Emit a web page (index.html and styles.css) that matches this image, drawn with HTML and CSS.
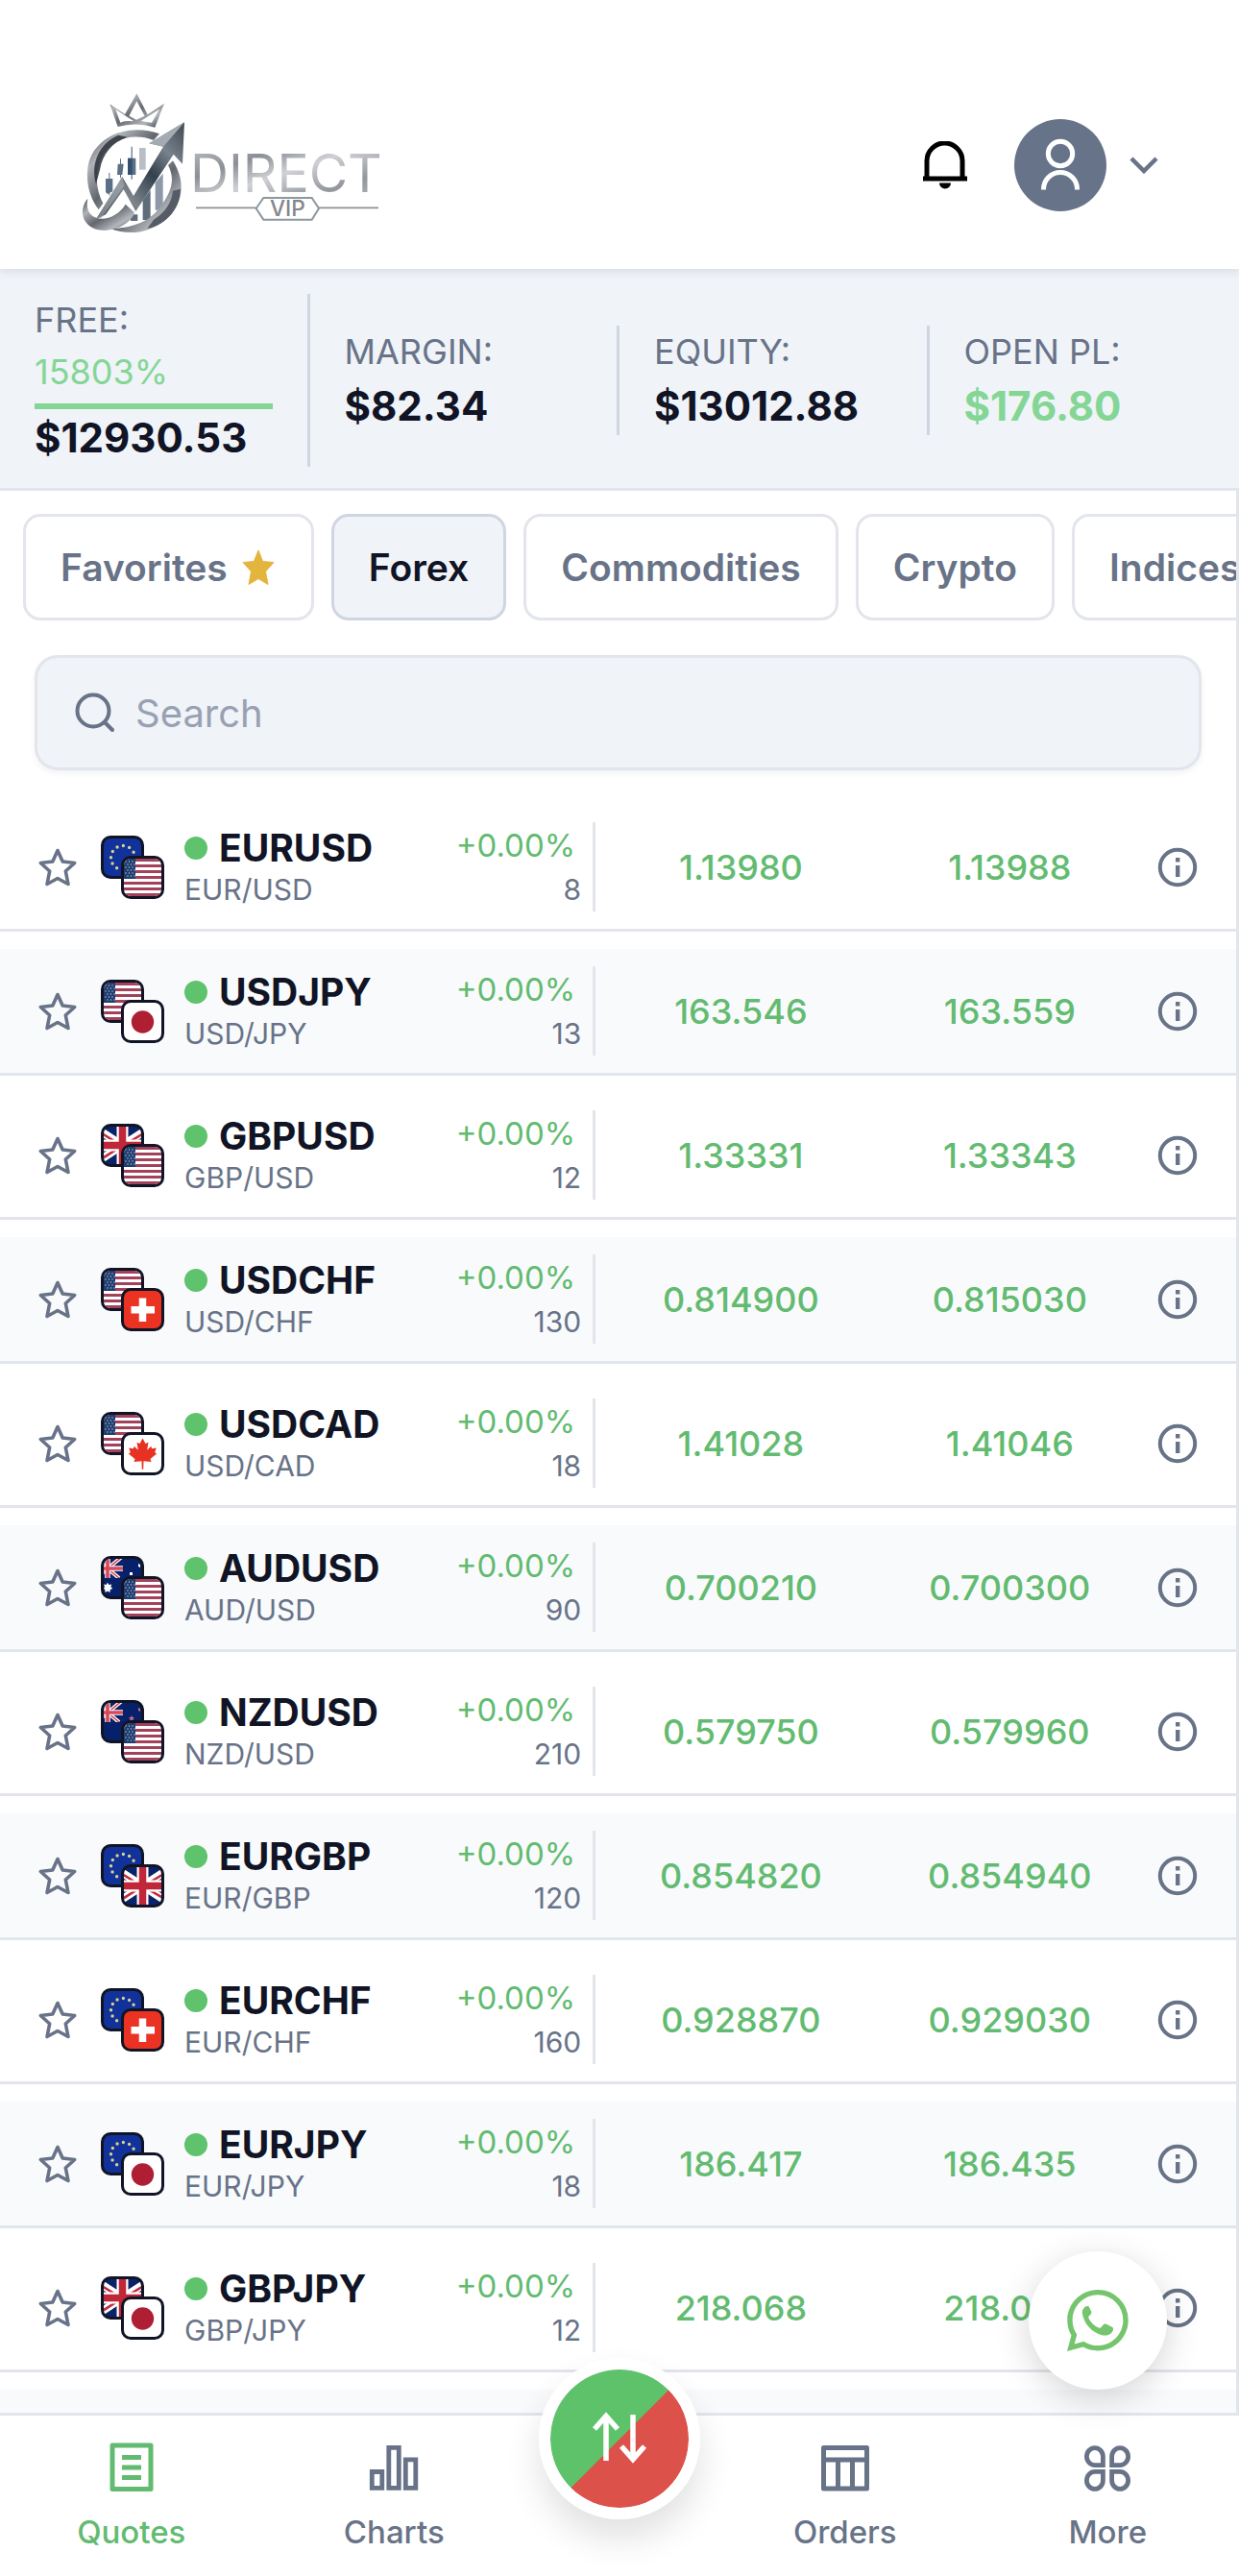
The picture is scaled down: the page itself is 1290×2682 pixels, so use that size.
FILE: index.html
```html
<!DOCTYPE html>
<html lang="en">
<head>
<meta charset="utf-8">
<meta name="viewport" content="width=device-width, initial-scale=1">
<title>Direct VIP – Quotes</title>
<link rel="stylesheet" href="styles.css">
</head>
<body>
<svg class="sprite" width="0" height="0" aria-hidden="true">
  <symbol id="star" viewBox="0 0 42 42"><path d="M21 3.500 26.200 15 38.700 16.500 29.300 25 32 38.500 21 32.500 10 38.500 12.700 25 3.300 16.500 15.800 15Z" fill="none" stroke="currentColor" stroke-width="3.600" stroke-linejoin="round"/></symbol>
  <symbol id="info" viewBox="0 0 42 42"><circle cx="21" cy="21" r="18.200" fill="none" stroke="currentColor" stroke-width="4"/><path d="M19 11h4.400v4.400H19zM19 19h4.400v12H19z" fill="currentColor"/></symbol>
  <symbol id="eu" viewBox="0 0 39 39"><path fill="#11329a" d="M0 0h39v39H0z"/><circle cx="20" cy="20" r="12.500" fill="none" stroke="#d9d28e" stroke-width="3.400" stroke-linecap="round" stroke-dasharray="0 6.545"/></symbol>
  <symbol id="us" viewBox="0 0 39 39"><path fill="#fff" d="M0 0h39v39H0z"/><path stroke="#a3415c" stroke-width="3" d="M0 1.500h39M0 7.500h39M0 13.500h39M0 19.500h39M0 25.500h39M0 31.500h39M0 37.500h39"/><path fill="#1f3d70" d="M0 0h12v21H0z"/><path stroke="#b9c8dc" stroke-width="1.400" stroke-linecap="round" stroke-dasharray="0 3.500" d="M2 3h10M4 6h8M2 9h10M4 12h8M2 15h10M4 18h8"/></symbol>
  <symbol id="jp" viewBox="0 0 39 39"><path fill="#fff" d="M0 0h39v39H0z"/><circle cx="19.500" cy="20" r="11.700" fill="#ae1f33"/></symbol>
  <symbol id="gb" viewBox="0 0 39 39"><path fill="#0a2268" d="M0 0h39v39H0z"/><path stroke="#fff" stroke-width="8" d="M-6 3 45 36M45 3-6 36"/><path stroke="#c22c3c" stroke-width="2.600" d="M-6 4.500 19 20M45 5 20 20M-6 36 19 20M45 34.500 20 20"/><path stroke="#fff" stroke-width="12" d="M19.500 0v39M0 19.500h39"/><path stroke="#c0283a" stroke-width="7.500" d="M19.500 0v39M0 19.500h39"/></symbol>
  <symbol id="ch" viewBox="0 0 39 39"><path fill="#ea3323" d="M0 0h39v39H0z"/><path stroke="#fff" stroke-width="7.500" d="M19.500 7.500v24.500M7.500 19.700h24.500"/></symbol>
  <symbol id="ca" viewBox="0 0 39 39"><path fill="#fff" d="M0 0h39v39H0z"/><path fill="#e83123" d="M19.500 3.500l3 5.500 3-1.300-1.300 8 4-4 1 2.600 4.600-.8-1.600 4.700 2 1.300-6.700 5.500 1 3-8-.8-.3 8.600h-1.400l-.3-8.600-8 .8 1-3-6.700-5.500 2-1.300-1.600-4.700 4.600.8 1-2.600 4 4-1.300-8 3 1.300z"/></symbol>
  <symbol id="canton" viewBox="0 0 20 20"><path fill="#0a2268" d="M0 0h20v20H0z"/><path stroke="#fff" stroke-width="4" d="M-8 0 16 20M20-3-8 20"/><path stroke="#d8485a" stroke-width="1.600" d="M-8 0 16 20M20-3-8 20"/><path stroke="#fff" stroke-width="5.500" d="M4 0v20M0 10h20"/><path stroke="#d8485a" stroke-width="3.600" d="M4 0v20M0 10h20"/></symbol>
  <symbol id="au" viewBox="0 0 39 39"><path fill="#07206a" d="M0 0h39v39H0z"/><use href="#canton" width="20" height="20"/><path fill="#fff" d="M4 24.500l1.300 2.500 3-.6-1 2.600 2 2-2.600 1-.2 3-2.500-1.500-2.500 1.500-.2-3L0 31l1-2-1-2.600 2.700.6zM27 14h3v3h-3zM36 5l2 1v3l-2-1z"/></symbol>
  <symbol id="nz" viewBox="0 0 39 39"><path fill="#07206a" d="M0 0h39v39H0z"/><use href="#canton" width="20" height="20"/><path fill="#c76a80" d="M29 13l1 2h2l-1.500 1.500.5 2-2-1-2 1 .5-2L26 15h2zM36 5l2 1v3l-2-1z"/></symbol>
</svg>

<div class="app">
  <header class="header">
    <a class="logo" href="#" aria-label="Direct VIP home">
      <svg class="logo-art" viewBox="0 6 1080 540">
        <defs>
          <linearGradient id="silver" x1="0" y1="0" x2="1" y2="1"><stop offset="0" stop-color="#c6c8cc"/><stop offset=".3" stop-color="#8b8f96"/><stop offset=".5" stop-color="#cfd1d5"/><stop offset=".75" stop-color="#93969c"/><stop offset="1" stop-color="#b9bbc0"/></linearGradient>
          <linearGradient id="steel" x1="0" y1="1" x2="1" y2="0"><stop offset="0" stop-color="#2f363e"/><stop offset=".3" stop-color="#7d848c"/><stop offset=".55" stop-color="#33414d"/><stop offset=".75" stop-color="#78828c"/><stop offset="1" stop-color="#3f4750"/></linearGradient>
          <linearGradient id="ring" x1="0" y1="0" x2="1" y2="1"><stop offset="0" stop-color="#3f454d"/><stop offset=".25" stop-color="#b0b3b8"/><stop offset=".5" stop-color="#62676e"/><stop offset=".75" stop-color="#b4b8bd"/><stop offset="1" stop-color="#2b323a"/></linearGradient>
        </defs>
        <path d="M163 85 210 117 247 52 281 118 333 83 304 158Q245 140 188 156ZM181 101 196 143Q208 135 238 139ZM247 76 223 122 246 134 272 122ZM318 101 260 138 294 143Z" fill="url(#ring)" fill-rule="evenodd"/>
        <g fill="#5c6f85"><path d="M150 318h22v40l-16 8-6-6zM160 300h3v70h-3zM188 272h18l-4 34h-16zM195 256h3v60h-3zM219 254h25v52h-25z"/><path fill="#35506f" d="M219 254h12v52h-12zM230 218h3v102h-3z"/><path fill="#b9bec6" d="M255 222h20v68h-20z"/><path fill="#8d99a8" d="M305 330l24-28v114h-24z"/><path fill="#5f6c7c" d="M266 385l24-32v94h-24zM228 430h22v20h-22z"/></g>
        <path d="M318 178C230 145 125 178 98 265C84 320 98 375 128 415L142 395C118 350 116 300 138 250C170 190 240 175 300 198Z" fill="url(#ring)"/>
        <path d="M190 182C130 208 102 270 120 335L132 290C140 240 170 205 218 188Z" fill="#2b3139" opacity=".85"/>
        <path d="M360 262C402 330 394 400 332 450C280 492 215 494 165 474C220 474 286 458 320 406C360 356 366 315 345 276Z" fill="url(#ring)"/>
        <path d="M384 350C384 410 340 462 280 474L300 446C340 420 356 390 360 356Z" fill="#555c65"/>
        <path d="M94 380C60 420 80 480 150 480C200 476 232 450 240 424L212 398C190 436 136 458 106 432C92 418 90 400 94 380Z" fill="url(#ring)"/>
        <path d="M120 445 202 312 237 372 330 218 286 208 396 142 390 272 362 242 244 420 206 352 150 430Z" fill="url(#steel)"/>
        <path d="M286 208 396 142 330 218Z" fill="#a4abb3"/><path d="M120 445 202 312 208 340 138 440Z" fill="#a7adb4" opacity=".6"/>
        <text class="logo-name" x="414" y="360" fill="url(#silver)">DIRECT</text>
        <path d="M432 409H620M816 409H1002" stroke="#8d9399" stroke-width="5"/>
        <path d="M620 411 643 378H794L816 411 794 446H643Z" fill="none" stroke="#8d979e" stroke-width="6"/>
        <text class="logo-tag" x="718" y="436" text-anchor="middle" fill="#83868c">VIP</text>
      </svg>
    </a>
    <div class="header-actions">
      <button class="plain" aria-label="Notifications">
        <svg width="48" height="51" viewBox="0 0 48 51"><path d="M5 38V20.500a18.500 18.500 0 0 1 37 0V38" fill="none" stroke="#000" stroke-width="5"/><path d="M1 36.500h46v5H1zM18 43.500h12a6 6 0 0 1-12 0z"/></svg>
      </button>
      <button class="plain account" aria-label="Account">
        <span class="avatar"><svg width="42" height="56" viewBox="0 0 42 56" fill="none" stroke="#fff" stroke-width="5"><circle cx="21" cy="17" r="12.700"/><path d="M3.500 54.500V54a17.500 17.500 0 0 1 35 0v.500"/></svg></span>
        <svg width="30" height="18" viewBox="0 0 30 18"><path d="M2 2l13 13L28 2" fill="none" stroke="#687388" stroke-width="4.500"/></svg>
      </button>
    </div>
  </header>

  <section class="stats" aria-label="Account summary">
    <div class="stat"><div class="stat-body"><div class="stat-label">FREE:</div><div class="stat-label up">15803%</div><div class="stat-bar"></div><div class="stat-value">$12930.53</div></div></div>
    <div class="stat"><div class="stat-body"><div class="stat-label">MARGIN:</div><div class="stat-value">$82.34</div></div></div>
    <div class="stat"><div class="stat-body"><div class="stat-label">EQUITY:</div><div class="stat-value">$13012.88</div></div></div>
    <div class="stat"><div class="stat-body"><div class="stat-label">OPEN PL:</div><div class="stat-value up">$176.80</div></div></div>
  </section>

  <main class="panel">
    <div class="tabs">
      <button class="tab">Favorites <svg width="36" height="39" viewBox="0 0 36 39"><path d="M17 2l4.600 11.500 11.400 1-8.500 9.500 2.500 13.500-10-6-10 6 2.500-13.500L1 14.500l11.400-1z" fill="#e3b53e" stroke="#e3b53e" stroke-width="1" stroke-linejoin="round"/></svg></button>
      <button class="tab active">Forex</button>
      <button class="tab">Commodities</button>
      <button class="tab">Crypto</button>
      <button class="tab">Indices</button>
    </div>
    <label class="search">
      <svg width="42" height="42" viewBox="0 0 42 42" fill="none" stroke="#687388" stroke-width="4" stroke-linecap="round"><circle cx="19" cy="19" r="16.500"/><path d="M31 31l8 8"/></svg>
      <input type="search" placeholder="Search" aria-label="Search">
    </label>

    <table class="quotes">
      <colgroup><col class="c-star"><col class="c-flags"><col><col class="c-change"><col class="c-bid"><col class="c-ask"><col class="c-info"></colgroup>
      <tbody>
      <tr><td><button class="plain star" aria-label="Favorite EURUSD"><svg><use href="#star"/></svg></button></td><td><div class="flags"><svg><use href="#eu"/></svg><svg><use href="#us"/></svg></div></td><td><div class="name">EURUSD</div><div class="pair">EUR/USD</div></td><td><div class="change"><div class="pct">+0.00%</div><div class="spread">8</div></div></td><td class="price">1.13980</td><td class="price">1.13988</td><td class="info"><button class="plain" aria-label="EURUSD details"><svg><use href="#info"/></svg></button></td></tr>
      <tr><td><button class="plain star" aria-label="Favorite USDJPY"><svg><use href="#star"/></svg></button></td><td><div class="flags"><svg><use href="#us"/></svg><svg><use href="#jp"/></svg></div></td><td><div class="name">USDJPY</div><div class="pair">USD/JPY</div></td><td><div class="change"><div class="pct">+0.00%</div><div class="spread">13</div></div></td><td class="price">163.546</td><td class="price">163.559</td><td class="info"><button class="plain" aria-label="USDJPY details"><svg><use href="#info"/></svg></button></td></tr>
      <tr><td><button class="plain star" aria-label="Favorite GBPUSD"><svg><use href="#star"/></svg></button></td><td><div class="flags"><svg><use href="#gb"/></svg><svg><use href="#us"/></svg></div></td><td><div class="name">GBPUSD</div><div class="pair">GBP/USD</div></td><td><div class="change"><div class="pct">+0.00%</div><div class="spread">12</div></div></td><td class="price">1.33331</td><td class="price">1.33343</td><td class="info"><button class="plain" aria-label="GBPUSD details"><svg><use href="#info"/></svg></button></td></tr>
      <tr><td><button class="plain star" aria-label="Favorite USDCHF"><svg><use href="#star"/></svg></button></td><td><div class="flags"><svg><use href="#us"/></svg><svg><use href="#ch"/></svg></div></td><td><div class="name">USDCHF</div><div class="pair">USD/CHF</div></td><td><div class="change"><div class="pct">+0.00%</div><div class="spread">130</div></div></td><td class="price">0.814900</td><td class="price">0.815030</td><td class="info"><button class="plain" aria-label="USDCHF details"><svg><use href="#info"/></svg></button></td></tr>
      <tr><td><button class="plain star" aria-label="Favorite USDCAD"><svg><use href="#star"/></svg></button></td><td><div class="flags"><svg><use href="#us"/></svg><svg><use href="#ca"/></svg></div></td><td><div class="name">USDCAD</div><div class="pair">USD/CAD</div></td><td><div class="change"><div class="pct">+0.00%</div><div class="spread">18</div></div></td><td class="price">1.41028</td><td class="price">1.41046</td><td class="info"><button class="plain" aria-label="USDCAD details"><svg><use href="#info"/></svg></button></td></tr>
      <tr><td><button class="plain star" aria-label="Favorite AUDUSD"><svg><use href="#star"/></svg></button></td><td><div class="flags"><svg><use href="#au"/></svg><svg><use href="#us"/></svg></div></td><td><div class="name">AUDUSD</div><div class="pair">AUD/USD</div></td><td><div class="change"><div class="pct">+0.00%</div><div class="spread">90</div></div></td><td class="price">0.700210</td><td class="price">0.700300</td><td class="info"><button class="plain" aria-label="AUDUSD details"><svg><use href="#info"/></svg></button></td></tr>
      <tr><td><button class="plain star" aria-label="Favorite NZDUSD"><svg><use href="#star"/></svg></button></td><td><div class="flags"><svg><use href="#nz"/></svg><svg><use href="#us"/></svg></div></td><td><div class="name">NZDUSD</div><div class="pair">NZD/USD</div></td><td><div class="change"><div class="pct">+0.00%</div><div class="spread">210</div></div></td><td class="price">0.579750</td><td class="price">0.579960</td><td class="info"><button class="plain" aria-label="NZDUSD details"><svg><use href="#info"/></svg></button></td></tr>
      <tr><td><button class="plain star" aria-label="Favorite EURGBP"><svg><use href="#star"/></svg></button></td><td><div class="flags"><svg><use href="#eu"/></svg><svg><use href="#gb"/></svg></div></td><td><div class="name">EURGBP</div><div class="pair">EUR/GBP</div></td><td><div class="change"><div class="pct">+0.00%</div><div class="spread">120</div></div></td><td class="price">0.854820</td><td class="price">0.854940</td><td class="info"><button class="plain" aria-label="EURGBP details"><svg><use href="#info"/></svg></button></td></tr>
      <tr><td><button class="plain star" aria-label="Favorite EURCHF"><svg><use href="#star"/></svg></button></td><td><div class="flags"><svg><use href="#eu"/></svg><svg><use href="#ch"/></svg></div></td><td><div class="name">EURCHF</div><div class="pair">EUR/CHF</div></td><td><div class="change"><div class="pct">+0.00%</div><div class="spread">160</div></div></td><td class="price">0.928870</td><td class="price">0.929030</td><td class="info"><button class="plain" aria-label="EURCHF details"><svg><use href="#info"/></svg></button></td></tr>
      <tr><td><button class="plain star" aria-label="Favorite EURJPY"><svg><use href="#star"/></svg></button></td><td><div class="flags"><svg><use href="#eu"/></svg><svg><use href="#jp"/></svg></div></td><td><div class="name">EURJPY</div><div class="pair">EUR/JPY</div></td><td><div class="change"><div class="pct">+0.00%</div><div class="spread">18</div></div></td><td class="price">186.417</td><td class="price">186.435</td><td class="info"><button class="plain" aria-label="EURJPY details"><svg><use href="#info"/></svg></button></td></tr>
      <tr><td><button class="plain star" aria-label="Favorite GBPJPY"><svg><use href="#star"/></svg></button></td><td><div class="flags"><svg><use href="#gb"/></svg><svg><use href="#jp"/></svg></div></td><td><div class="name">GBPJPY</div><div class="pair">GBP/JPY</div></td><td><div class="change"><div class="pct">+0.00%</div><div class="spread">12</div></div></td><td class="price">218.068</td><td class="price">218.080</td><td class="info"><button class="plain" aria-label="GBPJPY details"><svg><use href="#info"/></svg></button></td></tr>
      <tr class="more-rows"><td colspan="7"></td></tr>
      </tbody>
    </table>
  </main>

  <nav class="nav">
    <a class="nav-item current" href="#quotes"><svg width="48" height="54" viewBox="0 0 48 54"><path d="M4 4h40v45.500H4z" fill="none" stroke="currentColor" stroke-width="5" stroke-linejoin="round"/><path d="M14 16.500h20M14 27h20M14 37.500h20" stroke="currentColor" stroke-width="5"/></svg>Quotes</a>
    <a class="nav-item" href="#charts"><svg width="52" height="54" viewBox="0 0 52 54" fill="none" stroke="currentColor" stroke-width="4.800"><path d="M3.300 31.500h10.500v16.800H3.300zM20.800 6.300h10.500v42H20.800zM38.300 18.800h10.500v29.500H38.300z"/></svg>Charts</a>
    <button class="fab" aria-label="New trade"><svg width="66" height="58" viewBox="0 0 66 58" fill="none" stroke="#fff" stroke-width="5.500"><path d="M19 52V6M7 19 19 5.500 31 19M47 4v46M35 37l12 13.500L59 37"/></svg></button>
    <a class="nav-item" href="#orders"><svg width="52" height="54" viewBox="0 0 52 54" fill="none" stroke="currentColor" stroke-width="5" stroke-linejoin="round"><path d="M3.500 6.500h45V49h-45zM3.500 19h45M18.500 19v30M33.500 19v30"/></svg>Orders</a>
    <a class="nav-item" href="#more"><svg width="52" height="54" viewBox="0 0 52 54" fill="none" stroke="currentColor" stroke-width="4.800"><path d="M21.400 24.600h-8.500a8.500 9 0 1 1 8.500-9zM30.600 24.600h8.500a8.500 9 0 1 0-8.500-9zM21.400 31.400h-8.500a8.500 9 0 1 0 8.500 9zM30.600 31.400h8.500a8.500 9 0 1 1-8.500 9z"/></svg>More</a>
  </nav>

  <button class="chat" aria-label="WhatsApp chat"><svg width="64" height="64" viewBox="0 0 16 16" fill="#74c56d"><path fill-rule="evenodd" d="M13.601 2.326A7.850 7.850 0 0 0 7.994 0C3.627 0 .068 3.558.064 7.926c0 1.399.366 2.760 1.057 3.965L0 16l4.204-1.102a7.900 7.900 0 0 0 3.790.965h.004c4.368 0 7.926-3.558 7.930-7.930A7.900 7.900 0 0 0 13.600 2.326zM7.994 14.521a6.600 6.600 0 0 1-3.356-.920l-.240-.144-2.494.654.666-2.433-.156-.251a6.560 6.560 0 0 1-1.007-3.505c0-3.626 2.957-6.584 6.591-6.584a6.560 6.560 0 0 1 4.660 1.931 6.560 6.560 0 0 1 1.928 4.660c-.004 3.639-2.961 6.592-6.592 6.592z"/><path d="M5 4.300c-.8.300-1.200 1.100-1 2.100.5 2.600 2.700 4.900 5.100 5.400 1.400.3 2.700-.3 2.900-1.500 0-.3 0-.5-.3-.6l-1.600-.8c-.3-.1-.5 0-.7.2l-.6.7c-.2.2-.4.2-.6.1-1.200-.5-2-1.300-2.600-2.500-.1-.2 0-.4.1-.5l.5-.6c.2-.2.2-.4.1-.6l-.6-1.300c-.1-.2-.4-.2-.7-.1z"/></svg></button>
</div>
</body>
</html>
```
FILE: styles.css
```css
:root {
  --text: #101425;
  --muted: #687388;
  --line: #e2e5eb;
  --tint: #f0f3f8;
  --green: #62bb70;
  --green-light: #84d695;
}
* { box-sizing: border-box; }
body {
  margin: 0;
  background: #fff;
  color: var(--text);
  font-family: Inter, "Liberation Sans", sans-serif;
}
svg { display: block; }
.sprite { position: absolute; }
button { font: inherit; color: inherit; cursor: pointer; }
.plain { padding: 0; border: 0; background: none; }

.app {
  position: relative;
  display: flex;
  flex-direction: column;
  height: 100vh;
  overflow: hidden;
}

/* Header */
.header {
  position: relative;
  z-index: 1;
  display: flex;
  align-items: center;
  justify-content: space-between;
  padding: 64px 84px 0 60px;
  height: 280px;
  flex: none;
  background: #fff;
  box-shadow: 0 3px 9px rgba(20, 40, 60, .1);
}
.logo-art { width: 360px; height: 180px; }
.logo-name { font-size: 166px; font-weight: 400; }
.logo-tag { font-size: 68px; font-weight: 500; }
.header-actions { display: flex; align-items: center; gap: 48px; }
.account { display: flex; align-items: center; gap: 24px; }
.avatar {
  display: grid;
  place-items: center;
  width: 96px;
  height: 96px;
  border-radius: 50%;
  background: #677389;
}
.avatar svg { margin-bottom: 2px; }

/* Account summary */
.stats {
  display: grid;
  grid-template-columns: repeat(4, 1fr);
  align-items: center;
  flex: none;
  padding: 26px 0 22px;
  background: var(--tint);
  border-bottom: 3px solid var(--line);
}
.stat { border-right: 3px solid #cfd6e2; padding: 0 36px; }
.stat:last-child { border-right: 0; }
.stat-label { font-size: 36px; line-height: 54px; color: var(--muted); }
.stat-value { font-size: 42px; line-height: 60px; font-weight: 700; }
.stat-bar { height: 6px; margin-top: 6px; background: var(--green-light); }
.stats .up { color: var(--green-light); }

/* Quotes panel */
.panel {
  flex: 1;
  min-height: 0;
  overflow: hidden;
  border-right: 3px solid var(--line);
}
.tabs { display: flex; gap: 18px; padding: 24px; overflow: hidden; }
.tab {
  display: flex;
  flex: none;
  align-items: center;
  gap: 15px;
  height: 111px;
  padding: 0 36px;
  border: 3px solid var(--line);
  border-radius: 18px;
  background: #fff;
  color: var(--muted);
  font-size: 39px;
  font-weight: 600;
}
.tab.active { background: var(--tint); border-color: #cfd6e2; color: var(--text); }
.search {
  display: flex;
  align-items: center;
  gap: 21px;
  height: 120px;
  margin: 12px 36px 18px;
  padding: 0 39px;
  border: 3px solid var(--line);
  border-radius: 24px;
  background: var(--tint);
  box-shadow: 0 3px 6px rgba(20, 40, 60, .06);
}
.search input {
  flex: 1;
  min-width: 0;
  padding: 0;
  border: 0;
  outline: 0;
  background: none;
  font: inherit;
  font-size: 40px;
  color: var(--text);
}
.search input::placeholder { color: #98a1b2; opacity: 1; }

.quotes {
  width: 100%;
  table-layout: fixed;
  border-collapse: separate;
  border-spacing: 0 18px;
}
.c-star, .c-flags { width: 96px; }
.c-change { width: 200px; }
.c-bid { width: 23.5%; }
.c-ask { width: 20%; }
.c-info { width: 107px; }
.quotes td {
  height: 132px;
  padding: 18px 0;
  border-bottom: 3px solid var(--line);
  vertical-align: middle;
}
.quotes tr:nth-child(even) td { background: #f9fafc; }
.star { display: block; margin-left: 39px; color: var(--muted); }
.star svg, .info svg { width: 42px; height: 42px; }
.flags { display: grid; grid-template-columns: 21px 24px 21px; grid-template-rows: 21px 24px 21px; margin-left: 9px; }
.flags svg {
  grid-area: 1 / 1 / 3 / 3;
  width: 45px;
  height: 45px;
  border: 3px solid var(--text);
  border-radius: 10px;
  background: var(--text);
}
.flags svg + svg { grid-area: 2 / 2 / 4 / 4; }
.name {
  display: flex;
  align-items: center;
  gap: 12px;
  font-size: 39px;
  line-height: 46px;
  font-weight: 700;
}
.name::before {
  content: "";
  width: 24px;
  height: 24px;
  border-radius: 50%;
  background: #5fc26c;
}
.pair { font-size: 30px; line-height: 40px; color: var(--muted); }
.change { padding-right: 12px; border-right: 3px solid var(--line); text-align: right; }
.pct { padding-right: 6px; font-size: 33px; line-height: 48px; color: var(--green); }
.spread { font-size: 30px; line-height: 45px; color: var(--muted); }
.price { text-align: center; font-size: 36px; font-weight: 500; color: var(--green); }
.quotes .info { padding-right: 15px; text-align: center; color: var(--muted); }
.info button { vertical-align: middle; }

/* Bottom navigation */
.nav {
  position: relative;
  display: grid;
  grid-template-columns: 1fr 1fr 196px 1fr 1fr;
  flex: none;
  height: 170px;
  border-top: 3px solid var(--line);
  background: #fff;
}
.nav-item {
  display: flex;
  flex-direction: column;
  align-items: center;
  gap: 18px;
  padding-top: 27px;
  color: var(--muted);
  font-size: 33px;
  line-height: 44px;
  font-weight: 500;
  text-decoration: none;
}
.nav-item.current { color: var(--green); }
.fab {
  display: grid;
  place-items: center;
  justify-self: center;
  width: 168px;
  height: 168px;
  margin-top: -60px;
  padding: 0;
  border: 12px solid #fff;
  border-radius: 50%;
  background: linear-gradient(135deg, #5ec26b 50%, #dc524b 50%) padding-box;
  box-shadow: 0 20px 36px rgba(0, 0, 0, .12);
}
.chat {
  position: absolute;
  right: 75px;
  bottom: 194px;
  display: grid;
  place-items: center;
  width: 144px;
  height: 144px;
  padding: 0;
  border: 0;
  border-radius: 50%;
  background: #fff;
  box-shadow: 0 9px 36px rgba(0, 0, 0, .17);
}
```
